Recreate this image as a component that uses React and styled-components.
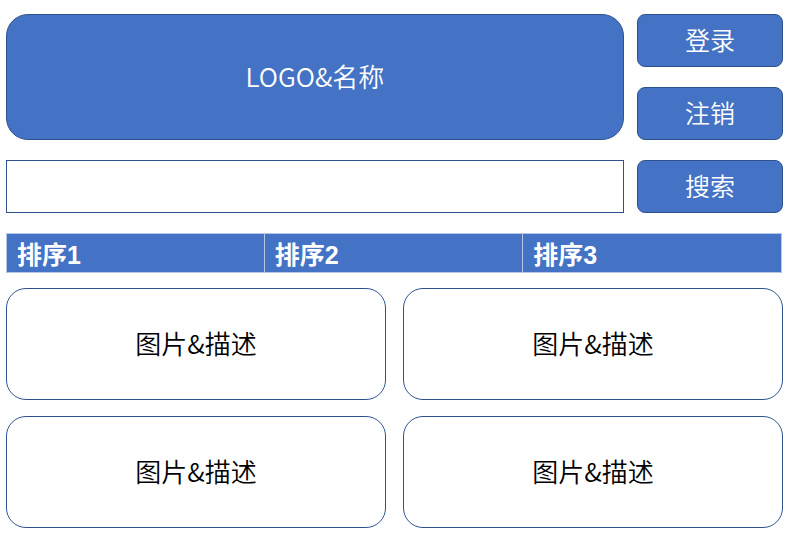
import React from 'react';
import styled, { createGlobalStyle } from 'styled-components';

const GlobalStyle = createGlobalStyle`
  body {
    margin: 0;
    background: #ffffff;
    font-family: "Noto Sans CJK SC", "Noto Sans", sans-serif;
  }
`;

const Page = styled.div`
  width: 776px;
  padding: 14px 0 0 6px;
  display: flex;
  flex-direction: column;
`;

const Header = styled.div`
  display: grid;
  grid-template-columns: 618px 146px;
  grid-template-rows: repeat(3, 53px);
  column-gap: 13px;
  row-gap: 20px;
`;

const Logo = styled.div`
  grid-row: 1 / span 2;
  box-sizing: border-box;
  background: #4472c4;
  border: 1px solid #2f528f;
  border-radius: 22px;
  display: flex;
  align-items: center;
  justify-content: center;
  color: #ffffff;
  font-size: 26px;
  font-weight: 350;
  padding-bottom: 4px;
`;

const ActionButton = styled.button`
  box-sizing: border-box;
  background: #4472c4;
  border: 1px solid #2f528f;
  border-radius: 8px;
  color: #ffffff;
  font-family: "Noto Sans CJK SC", sans-serif;
  font-size: 25px;
  font-weight: 350;
  padding: 0 0 3px;
  cursor: pointer;
`;

const SearchInput = styled.input`
  box-sizing: border-box;
  border: 1px solid #2f528f;
  background: #ffffff;
  outline: none;
  margin: 0;
  height: 53px;
  width: 618px;
`;

const Tabs = styled.div`
  margin-top: 20px;
  width: 776px;
  display: grid;
  grid-template-columns: repeat(3, 1fr);
  height: 40px;
`;

const Tab = styled.div`
  box-sizing: border-box;
  background: #4472c4;
  border: 1px solid #b4c7e7;
  margin-left: ${(p) => (p.$first ? '0' : '-1px')};
  color: #ffffff;
  font-family: "Liberation Sans", "Noto Sans CJK SC", sans-serif;
  font-weight: 700;
  font-size: 25px;
  display: flex;
  align-items: center;
  padding: 0 0 1px 10px;
`;

const Cards = styled.div`
  margin-top: 15px;
  display: grid;
  grid-template-columns: 380px 380px;
  grid-auto-rows: 112px;
  column-gap: 17px;
  row-gap: 16px;
`;

const Card = styled.div`
  box-sizing: border-box;
  border: 1px solid #2f528f;
  border-radius: 20px;
  background: #ffffff;
  display: flex;
  align-items: center;
  justify-content: center;
  color: #000000;
  font-size: 26px;
  font-weight: 350;
  padding-bottom: 4px;
`;

const sorts = ['排序1', '排序2', '排序3'];

export default function App() {
  return (
    <>
      <GlobalStyle />
      <Page>
        <Header>
          <Logo>LOGO&amp;名称</Logo>
          <ActionButton>登录</ActionButton>
          <ActionButton>注销</ActionButton>
          <SearchInput type="text" />
          <ActionButton>搜索</ActionButton>
        </Header>
        <Tabs>
          {sorts.map((s, i) => (
            <Tab key={s} $first={i === 0}>{s}</Tab>
          ))}
        </Tabs>
        <Cards>
          {[0, 1, 2, 3].map((i) => (
            <Card key={i}>图片&amp;描述</Card>
          ))}
        </Cards>
      </Page>
    </>
  );
}
